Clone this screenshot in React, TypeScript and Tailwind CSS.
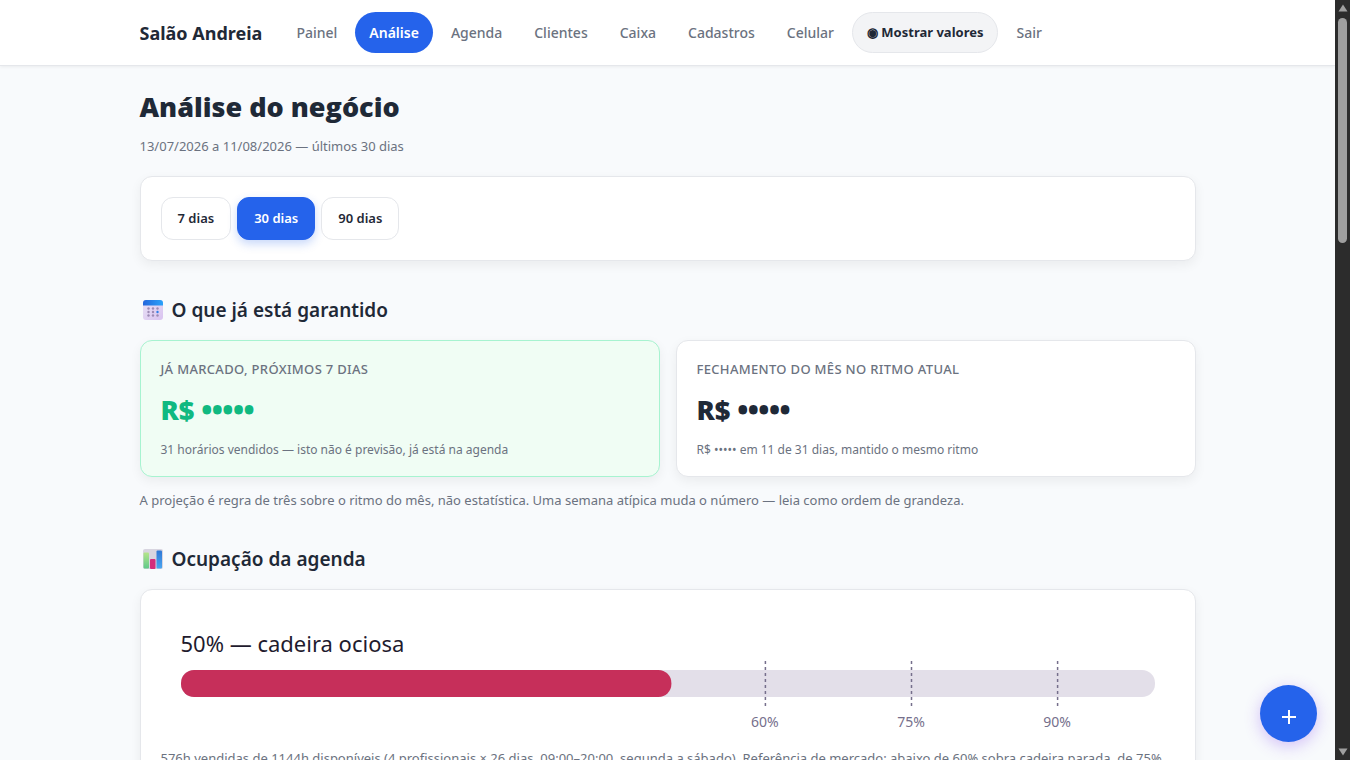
import { useState } from "react";

const navLinks = ['Painel', 'Análise', 'Agenda', 'Clientes', 'Caixa', 'Cadastros', 'Celular'];
const periods = [7, 30, 90];
const marks = [60, 75, 90];
const HIDDEN = '•••••';

const CalendarIcon = () => (
    <svg viewBox="0 0 20 20" className="w-5 h-5" aria-hidden="true">
        <defs>
            <linearGradient id="calBody" x1="0" y1="0" x2="1" y2="1">
                <stop offset="0" stopColor="#e9e2f5" />
                <stop offset="1" stopColor="#d9c3f0" />
            </linearGradient>
            <linearGradient id="calTop" x1="0" y1="0" x2="1" y2="0">
                <stop offset="0" stopColor="#2467dc" />
                <stop offset="1" stopColor="#2ba2fa" />
            </linearGradient>
        </defs>
        <rect width="20" height="20" rx="3" fill="url(#calBody)" />
        <path d="M0 5.500V3a3 3 0 0 1 3-3h14a3 3 0 0 1 3 3v2.500z" fill="url(#calTop)" />
        {[8.5, 12, 15.5].map((y) => [5.5, 10, 14.5].map((x) => (
            <circle key={`${x}-${y}`} cx={x} cy={y} r="1.200" fill={x === 14.5 && y === 12 ? '#2f7fe8' : '#9d8bb5'} />
        )))}
    </svg>
)

const ChartIcon = () => (
    <svg viewBox="0 0 20 20" className="w-5 h-5" aria-hidden="true">
        <defs>
            <linearGradient id="barGreen" x1="0" y1="0" x2="0" y2="1">
                <stop offset="0" stopColor="#b5e58a" />
                <stop offset="1" stopColor="#5fc98a" />
            </linearGradient>
            <linearGradient id="barBlue" x1="0" y1="0" x2="0" y2="1">
                <stop offset="0" stopColor="#2f78d6" />
                <stop offset="1" stopColor="#4aa5f0" />
            </linearGradient>
        </defs>
        <rect width="20" height="20" rx="2" fill="#d8d5e0" />
        <rect x="0.500" y="3.500" width="5.500" height="16" rx="1" fill="url(#barGreen)" />
        <rect x="7" y="10" width="5.500" height="10" rx="1" fill="#d42d7c" />
        <rect x="13.500" y="1.500" width="5.500" height="18" rx="1" fill="url(#barBlue)" />
    </svg>
)

const Scrollbar = () => (
    <div className="flex flex-col items-center justify-between w-[15px] shrink-0 bg-[#2c2c2c] py-1" aria-hidden="true">
        <div className="flex flex-col items-center gap-[6px]">
            <svg viewBox="0 0 10 8" className="w-[10px] h-2"><path d="M5 .5 9.500 7.500H.5z" fill="#9f9f9f" /></svg>
            <div className="w-[9px] h-[225px] rounded-full bg-[#9f9f9f]" />
        </div>
        <svg viewBox="0 0 10 8" className="w-[10px] h-2"><path d="M5 7.500 9.500 .5H.5z" fill="#9f9f9f" /></svg>
    </div>
)

const App = () => {
    const [period, setPeriod] = useState(30);
    const sold = 576;
    const available = 1144;

    return (
        <div className="flex h-screen font-['Noto_Sans','Open_Sans',sans-serif] text-[#1f2937]">
            <div className="flex-1 min-w-0 overflow-hidden bg-[#f8fafc]">
                <header className="bg-white border-b border-[#e5e7eb] shadow-[0_1px_3px_rgba(0,0,0,0.06)]">
                    <div className="flex items-center max-w-[1056px] mx-auto py-3">
                        <span className="text-lg font-bold mr-5">Salão Andreia</span>
                        <nav className="flex items-center gap-1 text-sm font-medium text-[#6b7280]">
                            {navLinks.map((link) => (
                                <a
                                    key={link}
                                    href="#"
                                    className={link === 'Análise'
                                        ? 'flex items-center h-[41px] px-[14px] rounded-full bg-[#2563eb] text-white font-semibold'
                                        : 'flex items-center h-[41px] px-[14px] rounded-full'}
                                >
                                    {link}
                                </a>
                            ))}
                            <button type="button" className="h-[41px] px-[14px] rounded-full border border-[#e5e7eb] bg-[#f3f4f6] text-[13px] font-bold text-[#1f2937]">
                                ◉ Mostrar valores
                            </button>
                            <a href="#" className="px-[14px]">Sair</a>
                        </nav>
                    </div>
                </header>

                <main className="max-w-[1056px] mx-auto pt-5">
                    <h1 className="font-['Open_Sans',sans-serif] text-[27px] leading-[42px] font-extrabold">Análise do negócio</h1>
                    <p className="mt-2 text-[13px] leading-5 text-[#6b7280]">13/07/2026 a 11/08/2026 — últimos 30 dias</p>

                    <div className="flex gap-[6px] mt-5 p-5 rounded-xl border border-[#e5e7eb] bg-white shadow-[0_4px_12px_rgba(0,0,0,0.06)]">
                        {periods.map((days) => (
                            <button
                                key={days}
                                type="button"
                                onClick={() => setPeriod(days)}
                                className={days === period
                                    ? 'h-[43px] px-4 rounded-xl border border-[#2563eb] bg-[#2563eb] text-[13px] font-semibold text-white shadow-[0_4px_10px_rgba(37,99,235,0.25)]'
                                    : 'h-[43px] px-4 rounded-xl border border-[#e5e7eb] bg-white text-[13px] font-semibold'}
                            >
                                {days} dias
                            </button>
                        ))}
                    </div>

                    <h2 className="flex items-center gap-[9px] mt-9 pl-[3px] text-[19px] leading-[26px] font-semibold"><CalendarIcon />O que já está garantido</h2>
                    <div className="grid grid-cols-2 gap-4 mt-[17px]">
                        <section className="px-5 pt-5 pb-[18px] rounded-xl border border-[#a7f3d0] bg-[#f0fdf4] shadow-[0_4px_12px_rgba(0,0,0,0.06)]">
                            <h3 className="text-[13px] leading-4 font-medium tracking-wide text-[#6b7280]">JÁ MARCADO, PRÓXIMOS 7 DIAS</h3>
                            <p className="mt-3 font-['Open_Sans',sans-serif] text-[27px] leading-[42px] font-extrabold text-[#10b981]">R$ {HIDDEN}</p>
                            <p className="mt-[11px] text-xs leading-4 text-[#6b7280]">31 horários vendidos — isto não é previsão, já está na agenda</p>
                        </section>
                        <section className="px-5 pt-5 pb-[18px] rounded-xl border border-[#e5e7eb] bg-white shadow-[0_4px_12px_rgba(0,0,0,0.06)]">
                            <h3 className="text-[13px] leading-4 font-medium tracking-wide text-[#6b7280]">FECHAMENTO DO MÊS NO RITMO ATUAL</h3>
                            <p className="mt-3 font-['Open_Sans',sans-serif] text-[27px] leading-[42px] font-extrabold">R$ {HIDDEN}</p>
                            <p className="mt-[11px] text-xs leading-4 text-[#6b7280]">R$ {HIDDEN} em 11 de 31 dias, mantido o mesmo ritmo</p>
                        </section>
                    </div>
                    <p className="mt-[13px] text-[13px] leading-5 text-[#6b7280]">
                        A projeção é regra de três sobre o ritmo do mês, não estatística. Uma semana atípica muda o número — leia como ordem de grandeza.
                    </p>

                    <h2 className="flex items-center gap-[9px] mt-9 pl-[3px] text-[19px] leading-[26px] font-semibold"><ChartIcon />Ocupação da agenda</h2>
                    <section className="mt-[17px] p-5 rounded-xl border border-[#e5e7eb] bg-white shadow-[0_4px_12px_rgba(0,0,0,0.06)]">
                        <div className="px-5 pt-4">
                            <p className="text-[22px] leading-[35px] text-[#1f1b2e]">{Math.round(sold / available * 100)}% — cadeira ociosa</p>
                            <svg className="block w-full h-[46px]" aria-hidden="true">
                                <rect y="9" width="100%" height="27" rx="13" fill="#e3dfe9" />
                                <rect y="9" width={`${sold / available * 100}%`} height="27" rx="13" fill="#c62f5a" />
                                {marks.map((mark) => (
                                    <line key={mark} x1={`${mark}%`} x2={`${mark}%`} y1="0" y2="46" stroke="#766f8c" strokeWidth="1.500" strokeDasharray="3 3" />
                                ))}
                            </svg>
                            <div className="relative h-[30px] text-sm leading-[30px] text-[#766f8c]">
                                {marks.map((mark) => (
                                    <span key={mark} className="absolute -translate-x-1/2" style={{ left: `${mark}%` }}>{mark}%</span>
                                ))}
                            </div>
                        </div>
                        <p className="mt-[11px] text-[13px] leading-5 text-[#6b7280]">
                            576h vendidas de 1144h disponíveis (4 profissionais × 26 dias, 09:00–20:00, segunda a sábado). Referência de mercado: abaixo de 60% sobra cadeira parada, de 75%
                        </p>
                    </section>
                </main>
            </div>
            <Scrollbar />
            <button type="button" aria-label="Adicionar" className="fixed right-[33px] bottom-[18px] flex items-center justify-center w-[57px] h-[57px] rounded-full bg-[#2563eb] text-white shadow-[0_4px_16px_rgba(124,58,237,0.3)]">
                <svg viewBox="0 0 16 16" className="w-4 h-4 mt-[6px]"><path d="M8 1v14M1 8h14" stroke="currentColor" strokeWidth="2" /></svg>
            </button>
        </div>
    )
}

export default App;
